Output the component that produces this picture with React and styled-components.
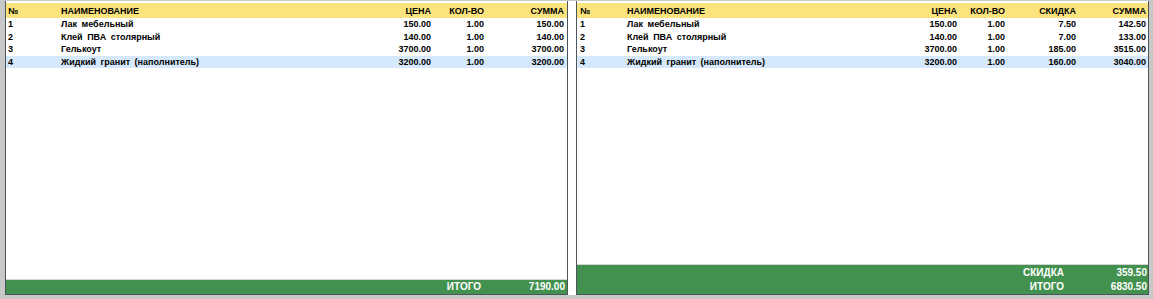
import React from "react";
import styled, { createGlobalStyle } from "styled-components";

const items = [
    { id: 1, name: "Лак мебельный", price: "150.00", qty: "1.00", disc: "7.50", sum: "150.00", total: "142.50" },
    { id: 2, name: "Клей ПВА столярный", price: "140.00", qty: "1.00", disc: "7.00", sum: "140.00", total: "133.00" },
    { id: 3, name: "Гелькоут", price: "3700.00", qty: "1.00", disc: "185.00", sum: "3700.00", total: "3515.00" },
    { id: 4, name: "Жидкий гранит (наполнитель)", price: "3200.00", qty: "1.00", disc: "160.00", sum: "3200.00", total: "3040.00" },
];

const SELECTED = 4;

const leftCols = "53px 310px 60px 53px 80px";
const rightCols = "47px 270px 60px 48px 71px 70px";

function App() {
    return (
        <>
            <GlobalStyle />
            <Frame>
                <Panel $width="563px">
                    <Header $cols={leftCols} $pad="0 2px">
                        <Cell>№</Cell>
                        <Cell>НАИМЕНОВАНИЕ</Cell>
                        <Num>ЦЕНА</Num>
                        <Num>КОЛ-ВО</Num>
                        <Num>СУММА</Num>
                    </Header>
                    {items.map((it) => (
                        <Row key={it.id} $cols={leftCols} $pad="0 2px" $active={it.id === SELECTED}>
                            <Cell>{it.id}</Cell>
                            <Cell>{it.name}</Cell>
                            <Num>{it.price}</Num>
                            <Num>{it.qty}</Num>
                            <Num>{it.sum}</Num>
                        </Row>
                    ))}
                    <Filler />
                    <Footer $valueCol="80px" $pad="0 2px">
                        <FootLabel $gap="4px">ИТОГО</FootLabel>
                        <FootValue>7190.00</FootValue>
                    </Footer>
                </Panel>
                <Panel $grow>
                    <Header $cols={rightCols} $pad="0 1px 0 3px">
                        <Cell>№</Cell>
                        <Cell>НАИМЕНОВАНИЕ</Cell>
                        <Num>ЦЕНА</Num>
                        <Num>КОЛ-ВО</Num>
                        <Num>СКИДКА</Num>
                        <Num>СУММА</Num>
                    </Header>
                    {items.map((it) => (
                        <Row key={it.id} $cols={rightCols} $pad="0 1px 0 3px" $active={it.id === SELECTED}>
                            <Cell>{it.id}</Cell>
                            <Cell>{it.name}</Cell>
                            <Num>{it.price}</Num>
                            <Num>{it.qty}</Num>
                            <Num>{it.disc}</Num>
                            <Num>{it.total}</Num>
                        </Row>
                    ))}
                    <Filler />
                    <Footer $valueCol="70px" $pad="0 1px 0 3px">
                        <FootLabel $gap="13px">СКИДКА</FootLabel>
                        <FootValue>359.50</FootValue>
                        <FootLabel $gap="13px">ИТОГО</FootLabel>
                        <FootValue>6830.50</FootValue>
                    </Footer>
                </Panel>
            </Frame>
        </>
    );
}

export default App;

const GlobalStyle = createGlobalStyle`
    html, body {
        margin: 0;
        padding: 0;
        background: #c8c8c8;
    }
    body {
        font-family: "Liberation Sans", Arial, sans-serif;
        color: #000;
    }
`;
const Frame = styled.div`
    display: flex;
    gap: 8px;
    height: 294px;
    margin: 1px 4px 4px 5px;
    background: #fff;
`;
const Panel = styled.div`
    display: flex;
    flex-direction: column;
    width: ${(p) => p.$width || "auto"};
    flex: ${(p) => (p.$grow ? "1" : "none")};
    padding-top: 2px;
    border-left: 1px solid #4a555c;
    border-right: 1px solid #4a555c;
    border-bottom: 1px solid #4a555c;
    box-sizing: border-box;
`;
const Header = styled.div`
    display: grid;
    grid-template-columns: ${(p) => p.$cols};
    align-items: center;
    height: 15px;
    padding: ${(p) => p.$pad};
    background: #fbe37e;
    font-size: 9px;
    font-weight: bold;
`;
const Row = styled.div`
    display: grid;
    grid-template-columns: ${(p) => p.$cols};
    align-items: center;
    height: 12.6px;
    padding: ${(p) => p.$pad};
    background: ${(p) => (p.$active ? "#d6e8fb" : "#fff")};
    font-size: 9px;
    font-weight: bold;
    word-spacing: 2px;
    &:first-of-type {
        margin-top: 1px;
    }
`;
const Cell = styled.div`
    white-space: nowrap;
    line-height: 12px;
`;
const Num = styled(Cell)`
    text-align: right;
`;
const Filler = styled.div`
    flex: 1;
`;
const Footer = styled.div`
    display: grid;
    grid-template-columns: 1fr ${(p) => p.$valueCol};
    grid-auto-rows: 14.5px;
    align-items: center;
    padding: ${(p) => p.$pad};
    background: #43914f;
    border-top: 1px solid #d4d4d4;
    color: #fff;
    font-size: 10px;
    font-weight: bold;
`;
const FootLabel = styled.div`
    text-align: right;
    padding-right: ${(p) => p.$gap};
`;
const FootValue = styled.div`
    text-align: right;
`;
